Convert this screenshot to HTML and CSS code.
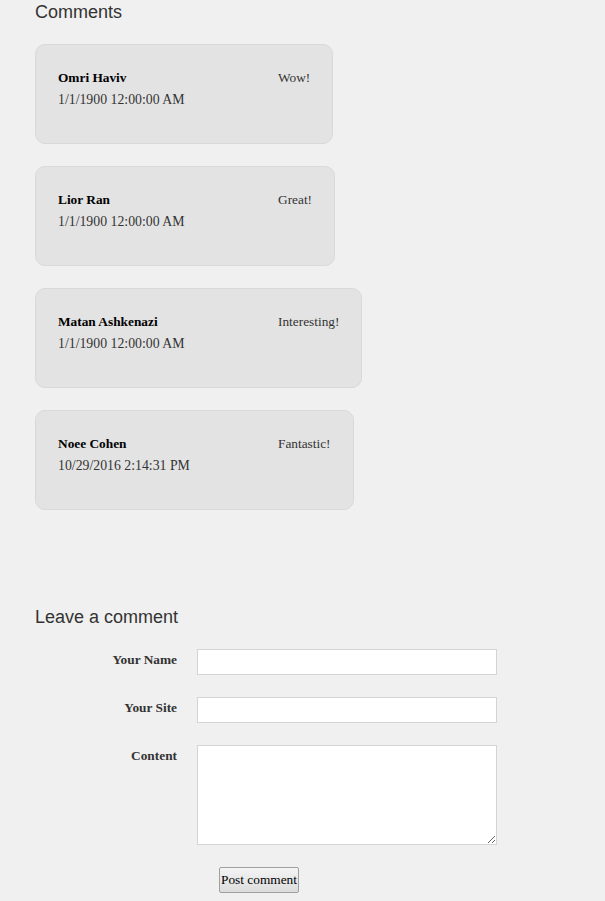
FILE: index.html
```html
<!DOCTYPE html>
<html>
<head>
<meta charset="utf-8">
<title>Comments</title>
<link rel="stylesheet" href="styles.css">
</head>
<body>
<div class="page">
  <h2 class="heading">Comments</h2>
  <div class="comments">
    <div class="card">
      <div class="meta">
        <div class="name">Omri Haviv</div>
        <div class="date">1/1/1900 12:00:00 AM</div>
      </div>
      <div class="text">Wow!</div>
    </div>
    <div class="card">
      <div class="meta">
        <div class="name">Lior Ran</div>
        <div class="date">1/1/1900 12:00:00 AM</div>
      </div>
      <div class="text">Great!</div>
    </div>
    <div class="card">
      <div class="meta">
        <div class="name">Matan Ashkenazi</div>
        <div class="date">1/1/1900 12:00:00 AM</div>
      </div>
      <div class="text">Interesting!</div>
    </div>
    <div class="card">
      <div class="meta">
        <div class="name">Noee Cohen</div>
        <div class="date">10/29/2016 2:14:31 PM</div>
      </div>
      <div class="text">Fantastic!</div>
    </div>
  </div>

  <h2 class="heading heading-form">Leave a comment</h2>
  <form class="form">
    <label class="label" for="name">Your Name</label>
    <input class="field" id="name" type="text">
    <label class="label" for="site">Your Site</label>
    <input class="field" id="site" type="text">
    <label class="label" for="content">Content</label>
    <textarea class="field area" id="content"></textarea>
    <div></div>
    <div class="actions"><button class="submit" type="button">Post comment</button></div>
  </form>
</div>
</body>
</html>
```

FILE: styles.css
```css
html, body {
  margin: 0;
  padding: 0;
  background: #f0f0f0;
}

.page {
  padding: 2px 0 0 35px;
  font-family: "Liberation Serif", "Times New Roman", serif;
  font-size: 13.33px;
  color: #333;
}

.heading {
  margin: 0;
  font-family: "Liberation Sans", Arial, sans-serif;
  font-size: 18px;
  font-weight: normal;
  line-height: 21px;
  color: #333;
}

.comments {
  display: flex;
  flex-direction: column;
  align-items: flex-start;
  gap: 22px;
  margin-top: 21px;
}

.card {
  display: flex;
  align-items: flex-start;
  background: #e3e3e3;
  border: 1px solid #d9d9d9;
  border-radius: 10px;
  padding: 22px 22px 32px 22px;
  line-height: 22px;
}

.meta {
  width: 220px;
}

.name {
  font-weight: bold;
  color: #000;
}

.date {
  color: #333;
  font-size: 13.8px;
}

.text {
  color: #333;
}

.heading-form {
  margin-top: 97px;
}

.form {
  display: grid;
  grid-template-columns: 142px 300px;
  column-gap: 20px;
  row-gap: 22px;
  margin-top: 21px;
}

.label {
  text-align: right;
  font-weight: bold;
  color: #333;
  padding-top: 3px;
  line-height: 15px;
}

.field {
  box-sizing: border-box;
  width: 300px;
  height: 26px;
  margin: 0;
  border: 1px solid #d4d4d4;
  background: #fff;
  font-family: "Liberation Serif", serif;
  font-size: 13.33px;
  outline: none;
}

.area {
  height: 100px;
  resize: both;
}

.actions {
  padding-left: 22px;
}

.submit {
  box-sizing: border-box;
  width: 80px;
  height: 26px;
  padding: 0;
  margin: 0;
  border: 1px solid #a0a0a0;
  border-radius: 2px;
  background: linear-gradient(#f4f4f4, #dcdcdc);
  font-family: "Liberation Serif", "Times New Roman", serif;
  font-size: 13.33px;
  color: #000;
}
```
